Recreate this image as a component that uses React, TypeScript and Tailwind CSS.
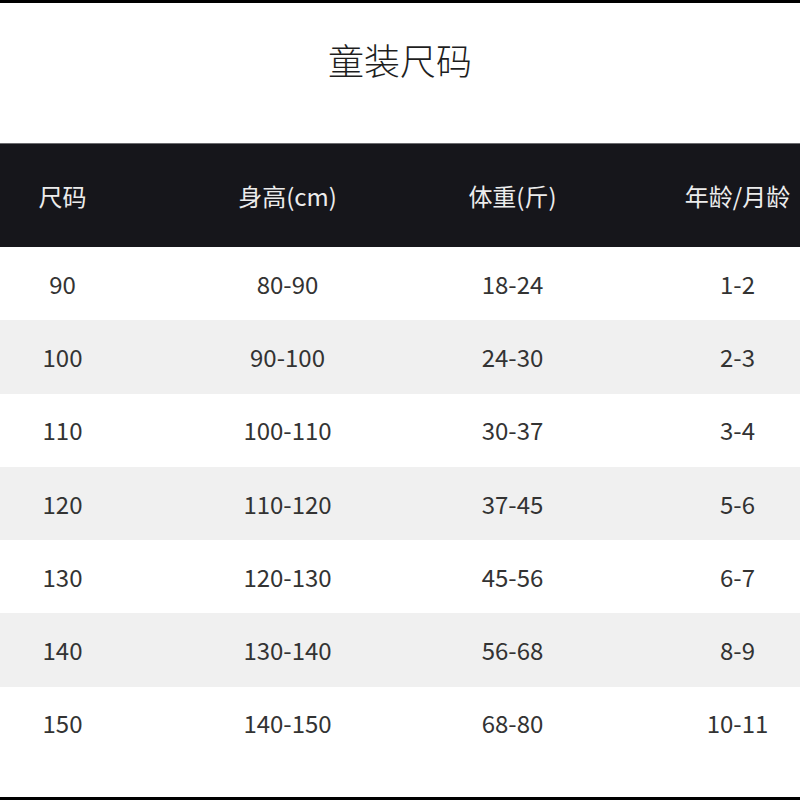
const rows = [
  ['90', '80-90', '18-24', '1-2'],
  ['100', '90-100', '24-30', '2-3'],
  ['110', '100-110', '30-37', '3-4'],
  ['120', '110-120', '37-45', '5-6'],
  ['130', '120-130', '45-56', '6-7'],
  ['140', '130-140', '56-68', '8-9'],
  ['150', '140-150', '68-80', '10-11'],
];

const headers = ['尺码', '身高(cm)', '体重(斤)', '年龄/月龄'];

export default function App() {
  return (
    <div
      className="w-[800px] h-[800px] bg-white flex flex-col overflow-hidden"
      style={{ fontFamily: '"Noto Sans CJK SC", "Noto Sans", sans-serif' }}
    >
      {/* top edge */}
      <div className="h-[3px] bg-black shrink-0" />

      {/* title */}
      <div className="h-[140px] shrink-0 flex justify-center pt-[36px]">
        <h1 className="text-[36px] leading-[40px] font-light text-[#1e1e1e]">童装尺码</h1>
      </div>

      {/* table */}
      <div className="overflow-hidden">
        <div className="-ml-[50px] w-[900px]">
          <div className="grid grid-cols-[repeat(4,225px)] h-[104px] items-center bg-[#16161b] border-t border-[#6a6a6e] text-[#ececec] text-[24px]">
            {headers.map((h) => (
              <div key={h} className="text-center">
                {h}
              </div>
            ))}
          </div>

          {rows.map((r, i) => (
            <div
              key={r[0]}
              className={`grid grid-cols-[repeat(4,225px)] h-[73.3px] items-center text-[24px] text-[#333333] ${
                i % 2 === 1 ? 'bg-[#f0f0f0]' : 'bg-white'
              }`}
            >
              {r.map((c, j) => (
                <div key={j} className="text-center">
                  {c}
                </div>
              ))}
            </div>
          ))}
        </div>
      </div>

      <div className="flex-1" />
      {/* bottom edge */}
      <div className="h-[3px] bg-black shrink-0" />
    </div>
  );
}
